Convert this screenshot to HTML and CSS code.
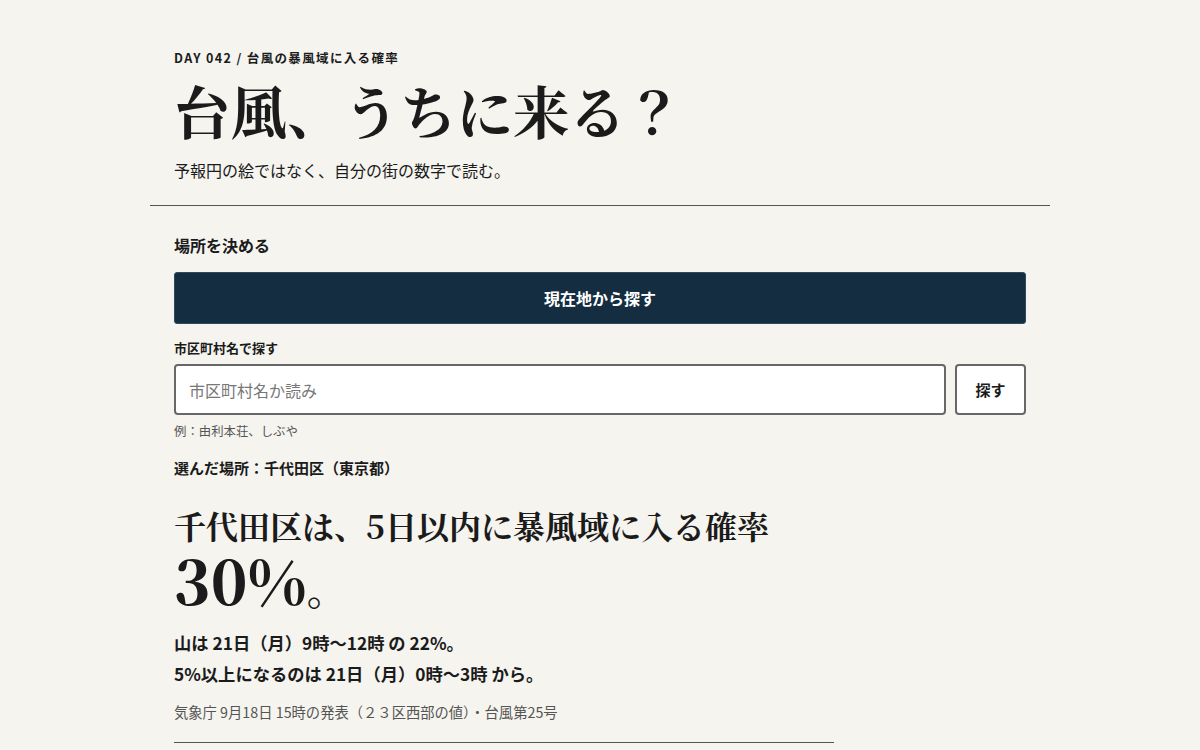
FILE: index.html
```html
<!DOCTYPE html>
<html lang="ja">
<head>
<meta charset="utf-8">
<title>台風、うちに来る？</title>
<link rel="stylesheet" href="styles.css">
</head>
<body>
<div class="page">
  <header class="head">
    <div class="kicker">DAY 042 / 台風の暴風域に入る確率</div>
    <h1 class="title">台風、うちに来る？</h1>
    <p class="lede">予報円の絵ではなく、自分の街の数字で読む。</p>
  </header>
  <section class="picker">
    <h2 class="sec-title">場所を決める</h2>
    <button class="geo-btn" type="button">現在地から探す</button>
    <label class="field-label" for="q">市区町村名で探す</label>
    <div class="search-row">
      <input id="q" class="search-input" type="text" placeholder="市区町村名か読み">
      <button class="search-btn" type="button">探す</button>
    </div>
    <p class="hint">例：由利本荘、しぶや</p>
    <p class="chosen">選んだ場所：千代田区（東京都）</p>
  </section>
  <section class="result">
    <h2 class="result-lead">千代田区は、5日以内に暴風域に入る確率</h2>
    <div class="result-num">30%<span class="maru">。</span></div>
    <p class="detail">山は 21日（月）9時〜12時 の 22%。</p>
    <p class="detail">5%以上になるのは 21日（月）0時〜3時 から。</p>
    <p class="source">気象庁 9月18日 15時の発表（２３区西部の値）・台風第25号</p>
    <hr class="end-rule">
  </section>
</div>
</body>
</html>
```

FILE: styles.css
```css
* { box-sizing: border-box; }
html, body { margin: 0; padding: 0; }
body {
  background: #f5f4ef;
  color: #1b1b1b;
  font-family: "Noto Sans CJK JP", "Noto Sans", sans-serif;
}
.page {
  width: 900px;
  margin: 0 auto;
}
.head {
  padding: 50px 24px 23px;
  border-bottom: 1px solid #555;
}
.kicker {
  font-size: 12.5px;
  font-weight: 700;
  letter-spacing: 1.35px;
  line-height: 16px;
}
.title {
  margin: 8px 0 0;
  font-family: "Noto Serif CJK JP", serif;
  font-size: 56.5px;
  font-weight: 700;
  line-height: 72px;
}
.lede {
  margin: 12px 0 0;
  font-size: 16px;
  line-height: 24px;
}
.picker {
  padding: 27px 24px 0;
}
.sec-title {
  margin: 0;
  font-size: 16px;
  font-weight: 700;
  line-height: 24px;
}
.geo-btn {
  display: block;
  width: 100%;
  height: 52px;
  margin-top: 15px;
  background: #142d40;
  color: #fff;
  border: 1px solid #2c4a60;
  border-radius: 3px;
  font-family: inherit;
  font-size: 16px;
  font-weight: 700;
}
.field-label {
  display: block;
  margin-top: 14px;
  font-size: 13px;
  font-weight: 700;
  line-height: 20px;
}
.search-row {
  display: flex;
  gap: 9px;
  margin-top: 6px;
}
.search-input {
  flex: 1;
  height: 51px;
  padding: 0 13px;
  border: 2px solid #676767;
  border-radius: 4px;
  background: #fff;
  font-family: inherit;
  font-size: 16px;
  color: #1b1b1b;
}
.search-input::placeholder { color: #777; }
.search-btn {
  width: 71px;
  height: 51px;
  border: 2px solid #676767;
  border-radius: 4px;
  background: #fff;
  font-family: inherit;
  font-size: 15px;
  font-weight: 700;
  color: #1b1b1b;
}
.hint {
  margin: 6px 0 0;
  font-size: 12.4px;
  line-height: 20px;
  color: #555;
}
.chosen {
  margin: 16px 0 0;
  font-size: 15px;
  font-weight: 700;
  line-height: 22px;
}
.result {
  padding: 26px 24px 0;
  width: 708px;
}
.result-lead {
  margin: 0;
  font-family: "Noto Serif CJK JP", serif;
  font-size: 32px;
  font-weight: 700;
  line-height: 40px;
}
.result-num {
  font-family: "Noto Serif CJK JP", serif;
  font-size: 60px;
  font-weight: 900;
  line-height: 68px;
}
.maru { font-size: 40px; }
.detail {
  margin: 0;
  font-size: 17.3px;
  font-weight: 700;
  line-height: 31px;
}
.result-num + .detail { margin-top: 5px; }
.source {
  margin: 12px 0 0;
  font-size: 14.3px;
  line-height: 22px;
  color: #555;
}
.end-rule {
  margin: 19px 0 0;
  border: 0;
  border-top: 1px solid #555;
}
```
